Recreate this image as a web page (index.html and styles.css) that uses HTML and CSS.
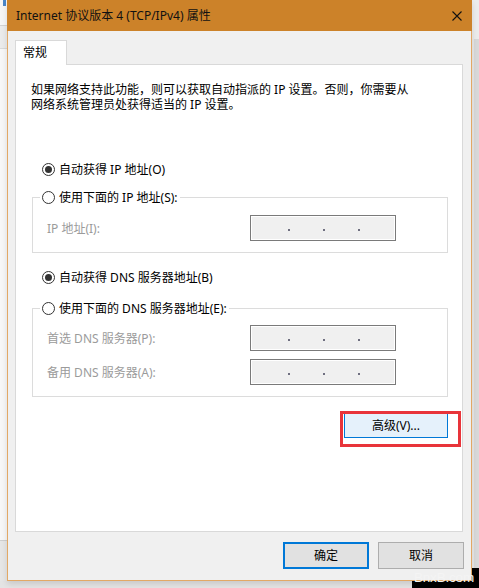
FILE: index.html
```html
<!DOCTYPE html>
<html lang="zh-CN">
<head>
<meta charset="utf-8">
<title>Internet 协议版本 4 (TCP/IPv4) 属性</title>
<link rel="stylesheet" href="styles.css">
</head>
<body>
<div class="desk">
  <div class="strip-left">
    <span class="app-icon"></span>
    <span class="strip-box"></span>
    <span class="strip-fill"></span>
    <span class="strip-low"></span>
  </div>
  <div class="window">
    <div class="titlebar">
      <span class="title">Internet 协议版本 4 (TCP/IPv4) 属性</span>
      <span class="close"><svg width="10" height="10" viewBox="0 0 10 10"><path d="M0.5 0.5L9.5 9.5M9.5 0.5L0.5 9.5" stroke="#111" stroke-width="1.1" fill="none"/></svg></span>
    </div>
    <div class="client">
      <div class="tabs"><div class="tab">常规</div></div>
      <div class="panel">
        <p class="intro">如果网络支持此功能，则可以获取自动指派的 IP 设置。否则，你需要从<br>网络系统管理员处获得适当的 IP 设置。</p>

        <div class="radio-row first"><span class="radio checked"></span><span>自动获得 IP 地址(O)</span></div>
        <fieldset class="group g-ip">
          <legend><span class="radio-row"><span class="radio"></span><span>使用下面的 IP 地址(S):</span></span></legend>
          <div class="field-row"><span class="lbl">IP 地址(I):</span><span class="ipbox"><i class="d"></i><i class="d"></i><i class="d"></i></span></div>
        </fieldset>

        <div class="radio-row dns-auto"><span class="radio checked"></span><span>自动获得 DNS 服务器地址(B)</span></div>
        <fieldset class="group g-dns">
          <legend><span class="radio-row"><span class="radio"></span><span>使用下面的 DNS 服务器地址(E):</span></span></legend>
          <div class="field-row"><span class="lbl">首选 DNS 服务器(P):</span><span class="ipbox"><i class="d"></i><i class="d"></i><i class="d"></i></span></div>
          <div class="field-row second"><span class="lbl">备用 DNS 服务器(A):</span><span class="ipbox"><i class="d"></i><i class="d"></i><i class="d"></i></span></div>
        </fieldset>

        <div class="adv-row">
          <div class="adv-wrap">
            <button class="btn adv" type="button">高级(V)...</button>
            <span class="highlight"></span>
          </div>
        </div>
      </div>
      <div class="actions">
        <button class="btn ok" type="button">确定</button>
        <button class="btn cancel" type="button">取消</button>
      </div>
    </div>
  </div>
  <div class="strip-right"><span class="sr-top"></span></div>
</div>
<div class="wm-box"></div>
<div class="wm-text">BnxB.com</div>
</body>
</html>
```

FILE: styles.css
```css
* { box-sizing: border-box; }
html, body { margin: 0; padding: 0; }
body {
  width: 479px;
  height: 588px;
  overflow: hidden;
  position: relative;
  background: #e4e4e4;
  font-family: "Noto Sans", "Noto Sans CJK SC", sans-serif;
  font-size: 12px;
  color: #000;
}

.desk { display: flex; height: 581px; }

.strip-left {
  width: 7px;
  display: flex;
  flex-direction: column;
  background: #f6f6f6;
}
.app-icon { display: block; width: 3px; height: 6px; margin-left: 3px; background: #4a86c8; }
.strip-box { display: block; height: 24px; margin-top: 19px; background: #ebebeb; border-top: 1px solid #d2d2d2; border-bottom: 1px solid #d9d9d9; }
.strip-fill { display: block; flex: 1; background: #f7f7f7; }
.strip-low { display: block; height: 41px; background: #e6e6e6; border-top: 1px solid #cfcfcf; }

.strip-right {
  width: 7px;
  display: flex;
  flex-direction: column;
  background: linear-gradient(to right, #e9e9e9 0 2px, #d9d9d9 2px);
}
.sr-top { display: block; height: 39px; background: #ececec; }

.window {
  width: 465px;
  height: 581px;
  position: relative;
  z-index: 1;
  background: #f0f0f0;
  border: 1px solid #e2a865;
  border-top: 0;
  display: flex;
  flex-direction: column;
  box-shadow: 0 3px 6px rgba(0,0,0,0.12);
}

.titlebar {
  height: 31px;
  margin: 0 -1px;
  background: #cc8229;
  display: flex;
  align-items: center;
  justify-content: space-between;
  padding-left: 9px;
}
.title { font-size: 12px; color: #111; line-height: 16px; padding-top: 1px; }
.close { width: 30px; height: 31px; display: flex; align-items: center; justify-content: center; }
.close svg { display: block; }

.client {
  flex: 1;
  display: flex;
  flex-direction: column;
  padding: 9px 8px 11px 7px;
}

.tabs { display: flex; height: 24px; }
.tab {
  width: 52px;
  height: 25px;
  background: #fff;
  border: 1px solid #d9d9d9;
  border-bottom: 0;
  padding-left: 7px;
  line-height: 23px;
  position: relative;
  z-index: 1;
}

.panel {
  height: 468px;
  background: #fff;
  border: 1px solid #d9d9d9;
  padding: 17px 14px 0 15px;
}

.intro { margin: 0; line-height: 15px; }

.radio-row {
  display: flex;
  align-items: center;
  gap: 4px;
  height: 15px;
  line-height: 15px;
  white-space: nowrap;
}
.radio {
  display: inline-block;
  flex: none;
  width: 13px;
  height: 13px;
  border: 1px solid #333;
  border-radius: 50%;
  background: #fff;
  position: relative;
}
.radio.checked::after {
  content: "";
  position: absolute;
  left: 2px;
  top: 2px;
  width: 7px;
  height: 7px;
  border-radius: 50%;
  background: #333;
}

.first { margin-top: 50px; padding-left: 11px; }
.dns-auto { margin-top: 17px; padding-left: 11px; }

.group {
  margin: 0 0 0 1px;
  border: 1px solid #dcdcdc;
  padding: 10px 14px 11px 14px;
  min-width: 0;
}
.g-ip { margin-top: 13px; }
.g-dns { margin-top: 16px; padding-top: 9px; }
.group legend {
  padding: 0 2px;
  margin-left: -7px;
  height: 15px;
  line-height: 15px;
}

.field-row { display: flex; align-items: center; height: 26px; }
.field-row.second { margin-top: 8px; }
.lbl { width: 203px; color: #9b9b9b; white-space: nowrap; }
.ipbox {
  width: 146px;
  height: 26px;
  border: 1px solid #7a7a7a;
  background: #f0f0f0;
  box-shadow: inset 0 0 0 1px #fff;
  display: flex;
  align-items: center;
  gap: 33px;
  padding-left: 37px;
  padding-top: 3px;
}
.d { display: block; width: 2px; height: 2px; background: #6f6f80; }

.btn {
  font-family: "Noto Sans", "Noto Sans CJK SC", sans-serif;
  font-size: 12px;
  color: #000;
  margin: 0;
  padding: 0;
  line-height: 15px;
}

.adv-row { display: flex; justify-content: flex-end; margin-top: 15px; }
.adv-wrap { position: relative; }
.adv {
  width: 104px;
  height: 26px;
  background: #e5f1fb;
  border: 1px solid #0078d7;
}
.highlight {
  position: absolute;
  left: -4px;
  top: -1px;
  width: 121px;
  height: 36px;
  border: 3px solid #e8343a;
}

.actions {
  display: flex;
  justify-content: flex-end;
  gap: 9px;
  margin-top: 10px;
  margin-right: -1px;
}
.ok, .cancel { width: 86px; height: 27px; background: #e1e1e1; }
.ok { border: 2px solid #0078d7; }
.cancel { border: 1px solid #adadad; }

.wm-box {
  position: absolute;
  left: 412px;
  top: 568px;
  right: 0;
  bottom: 0;
  background: #000;
  z-index: 0;
}
.wm-text {
  position: absolute;
  left: 414px;
  top: 569px;
  z-index: 2;
  font-family: "Liberation Sans", sans-serif;
  font-size: 13.5px;
  line-height: 17px;
  color: #f4f4f4;
  letter-spacing: -0.2px;
}
```
